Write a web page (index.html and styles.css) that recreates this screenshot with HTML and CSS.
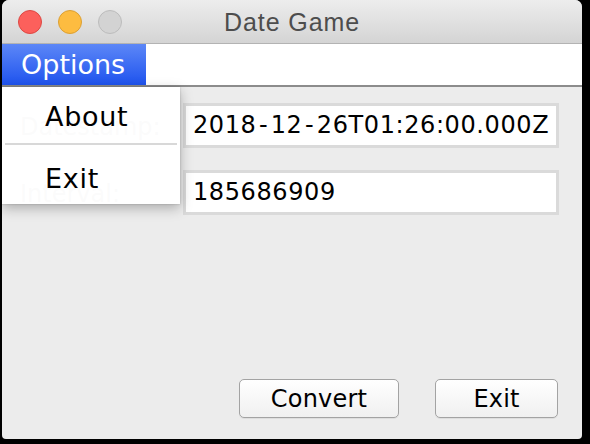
FILE: index.html
```html
<!DOCTYPE html>
<html>
<head>
<meta charset="utf-8">
<link rel="stylesheet" href="styles.css">
</head>
<body>
<div class="window">
  <div class="titlebar">
    <div class="lights">
      <span class="light red"></span>
      <span class="light yellow"></span>
      <span class="light gray"></span>
    </div>
    <div class="title">Date Game</div>
  </div>
  <div class="menubar">
    <div class="menu active">Options</div>
  </div>
  <div class="content">
    <div class="form">
      <label class="label">Datestamp:</label>
      <div class="field">2018<span class="dash">-</span>12<span class="dash">-</span>26T01:26:00.000Z</div>
      <label class="label">Interval:</label>
      <div class="field">185686909</div>
    </div>
    <div class="buttons">
      <button class="btn convert">Convert</button>
      <button class="btn exit">Exit</button>
    </div>
    <div class="popup">
      <div class="item first">About</div>
      <div class="sep"></div>
      <div class="item last">Exit</div>
    </div>
  </div>
</div>
</body>
</html>
```

FILE: styles.css
```css
html, body {
  margin: 0;
  padding: 0;
  background: #000;
  width: 590px;
  height: 444px;
  overflow: hidden;
}

.window {
  margin-left: 2px;
  width: 580px;
  height: 439px;
  background: #ececec;
  border-radius: 7px 7px 4px 4px;
  overflow: hidden;
  display: flex;
  flex-direction: column;
}

.titlebar {
  position: relative;
  height: 43px;
  flex: none;
  border-bottom: 1px solid #b3b3b3;
  background: linear-gradient(#ededed, #d4d4d4);
  display: flex;
  align-items: center;
  justify-content: center;
}

.lights {
  position: absolute;
  left: 16px;
  top: 10px;
  display: flex;
  gap: 16px;
}

.light {
  width: 22px;
  height: 22px;
  border-radius: 50%;
  border: 1px solid;
}

.red { background: #fc605c; border-color: #dd4843; }
.yellow { background: #fdbc40; border-color: #dca033; }
.gray { background: #d3d3d3; border-color: #bcbcbc; }

.title {
  font-family: "Liberation Sans", Arial, sans-serif;
  font-size: 25px;
  letter-spacing: 0.9px;
  color: #4d4d4d;
  padding-top: 2px;
}

.menubar {
  height: 41px;
  flex: none;
  background: #fff;
  border-bottom: 2px solid #8c8c8c;
  display: flex;
}

.menu {
  font-family: "DejaVu Sans", sans-serif;
  font-size: 27px;
  line-height: 41px;
  padding: 0 18px 0 19px;
  width: 107px;
  color: #000;
}

.menu.active {
  color: #fff;
  background: linear-gradient(#5c87f7, #1f53ee);
}

.content {
  position: relative;
  flex: 1;
  display: flex;
  flex-direction: column;
  padding: 16px 23px 21px 18px;
}

.form {
  display: grid;
  grid-template-columns: 163px 1fr;
  row-gap: 22px;
  align-items: center;
}

.label {
  font-family: "DejaVu Sans", sans-serif;
  font-size: 24px;
  color: #000;
  padding-top: 2px;
}

.field {
  height: 39px;
  border: 3px solid #dadada;
  background: #fff;
  font-family: "DejaVu Sans", sans-serif;
  font-size: 24px;
  letter-spacing: 0.6px;
  line-height: 39px;
  padding-left: 7px;
  color: #000;
  white-space: nowrap;
  overflow: hidden;
}

.dash {
  margin: 0 2.5px;
}

.buttons {
  margin-top: auto;
  display: flex;
  justify-content: flex-end;
  gap: 36px;
  padding-right: 1px;
}

.btn {
  height: 39px;
  border: 1px solid #a3a3a3;
  border-radius: 5px;
  background: linear-gradient(#ffffff, #f0f0f0);
  box-shadow: 0 1px 0 rgba(0, 0, 0, 0.06);
  font-family: "DejaVu Sans", sans-serif;
  font-size: 24px;
  letter-spacing: 0.2px;
  color: #000;
  padding: 0;
}

.convert { width: 160px; }
.exit { width: 123px; }

.popup {
  position: absolute;
  left: 0;
  top: 0;
  width: 178px;
  height: 117px;
  background: rgba(255, 255, 255, 0.985);
  box-shadow: 0 4px 12px rgba(0, 0, 0, 0.28), 0 0 2px rgba(0, 0, 0, 0.2);
  font-family: "DejaVu Sans", sans-serif;
  font-size: 27px;
  letter-spacing: 0.7px;
}

.item {
  height: 56px;
  line-height: 56px;
  padding-left: 43px;
  color: #000;
  box-sizing: border-box;
}

.item.first {
  padding-top: 2px;
}

.item.last {
  padding-top: 4px;
  height: 57px;
}

.sep {
  height: 2px;
  margin: 0 3px 2px 3px;
  background: #d8d8d8;
}
```
